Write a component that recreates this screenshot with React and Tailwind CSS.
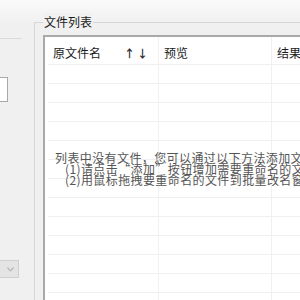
export default function App() {
  const rows = Array.from({ length: 13 });

  return (
    <div className="w-[300px] h-[300px] overflow-hidden flex bg-linear-to-b from-[#fafafa] to-[#f0f0f0] to-[8%] font-['Noto_Sans_CJK_SC',sans-serif] text-[12px] text-[#222]">
      {/* left side panel (cut off) */}
      <div className="w-[34px] shrink-0 flex flex-col">
        <div className="mt-[38px] w-[22px] border-t border-[#d9d9d9]" />
        <div className="mt-[38px] h-[25px] w-[8px] bg-white border border-l-0 border-[#a8a8a8]" />
        <div className="mt-auto mb-[22px] h-[18px] w-[19px] bg-[#e4e4e4] border border-l-0 border-[#cfcfcf] flex items-center justify-end pr-[4px]">
          <svg width="7" height="5" viewBox="0 0 7 5" fill="none">
            <path d="M0.5 0.5 L3.5 3.8 L6.5 0.5" stroke="#b5b5b5" strokeWidth="1.2" />
          </svg>
        </div>
      </div>

      {/* 文件列表 group box */}
      <div className="relative flex-1 mt-[22px] border-l border-t border-[#d6d6d6]">
        <span className="absolute -top-[10px] left-[8px] px-[1px] leading-[17px] bg-[#f1f1f1] text-[#1a1a1a]">
          文件列表
        </span>

        <div className="relative ml-[8px] mt-[12px] h-[300px] bg-white border-l-2 border-t-2 border-[#a9a9a9] pl-[3px]">
          {/* header */}
          <div className="flex h-[27px] text-[#1a1a1a]">
            <div className="w-[111px] shrink-0 border-r border-[#f0f0f0] pl-[5px] pt-[7px] flex">
              <span>原文件名</span>
              <span className="ml-[23px] tracking-[2px] font-bold text-[11px] leading-[18px] text-[#333]">↑↓</span>
            </div>
            <div className="w-[113px] shrink-0 border-r border-[#f0f0f0] pl-[5px] pt-[7px]">预览</div>
            <div className="flex-1 pl-[5px] pt-[7px] whitespace-nowrap">结果</div>
          </div>

          {/* empty grid rows */}
          {rows.map((_, i) => (
            <div key={i} className="flex h-[19px] border-t border-[#efefef]">
              <div className="w-[111px] shrink-0 border-r border-[#f0f0f0]" />
              <div className="w-[113px] shrink-0 border-r border-[#f0f0f0]" />
              <div className="flex-1" />
            </div>
          ))}

          {/* empty-list hint */}
          <div className="absolute top-[115px] left-[10px] whitespace-nowrap leading-[11px] tracking-[0.4px] text-[#555]">
            <div>列表中没有文件，您可以通过以下方法添加文件：</div>
            <div className="pl-[10px]">(1)请点击“添加”按钮增加需要重命名的文件</div>
            <div className="pl-[10px]">(2)用鼠标拖拽要重命名的文件到批量改名窗口</div>
          </div>
        </div>
      </div>
    </div>
  );
}
